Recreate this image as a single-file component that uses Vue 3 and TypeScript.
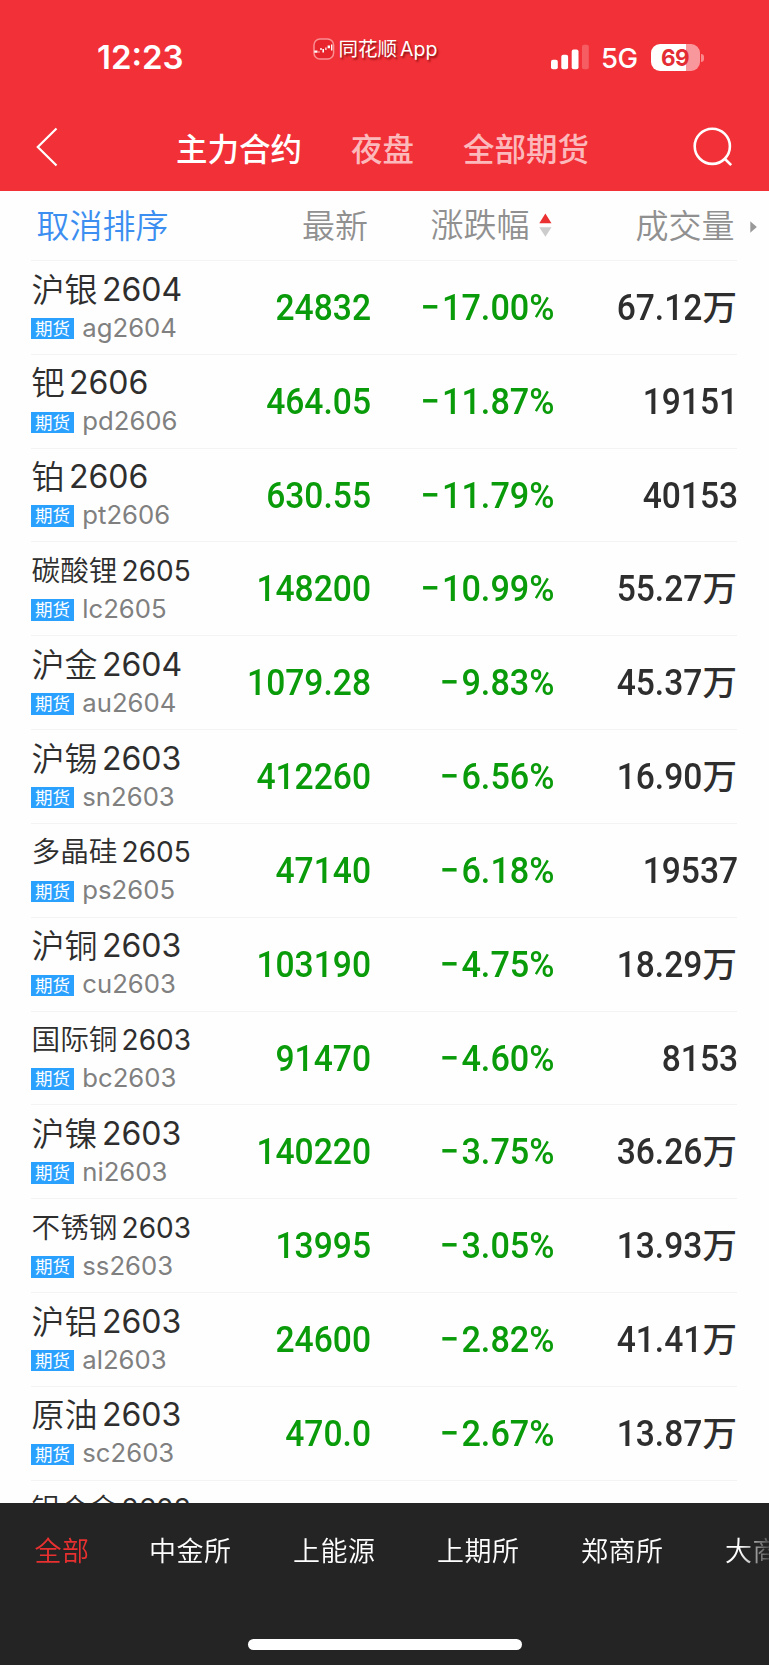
<script setup lang="ts">
interface Contract {
  name: string
  month: string
  code: string
  last: string
  change: string
  volume: string
  unit?: string
}

const contracts: Contract[] = [
  { name: '沪银', month: '2604', code: 'ag2604', last: '24832', change: '17.00%', volume: '67.12', unit: '万' },
  { name: '钯', month: '2606', code: 'pd2606', last: '464.05', change: '11.87%', volume: '19151' },
  { name: '铂', month: '2606', code: 'pt2606', last: '630.55', change: '11.79%', volume: '40153' },
  { name: '碳酸锂', month: '2605', code: 'lc2605', last: '148200', change: '10.99%', volume: '55.27', unit: '万' },
  { name: '沪金', month: '2604', code: 'au2604', last: '1079.28', change: '9.83%', volume: '45.37', unit: '万' },
  { name: '沪锡', month: '2603', code: 'sn2603', last: '412260', change: '6.56%', volume: '16.90', unit: '万' },
  { name: '多晶硅', month: '2605', code: 'ps2605', last: '47140', change: '6.18%', volume: '19537' },
  { name: '沪铜', month: '2603', code: 'cu2603', last: '103190', change: '4.75%', volume: '18.29', unit: '万' },
  { name: '国际铜', month: '2603', code: 'bc2603', last: '91470', change: '4.60%', volume: '8153' },
  { name: '沪镍', month: '2603', code: 'ni2603', last: '140220', change: '3.75%', volume: '36.26', unit: '万' },
  { name: '不锈钢', month: '2603', code: 'ss2603', last: '13995', change: '3.05%', volume: '13.93', unit: '万' },
  { name: '沪铝', month: '2603', code: 'al2603', last: '24600', change: '2.82%', volume: '41.41', unit: '万' },
  { name: '原油', month: '2603', code: 'sc2603', last: '470.0', change: '2.67%', volume: '13.87', unit: '万' },
  { name: '铝合金', month: '2603', code: '', last: '', change: '', volume: '' },
]

const topTabs: string[] = ['主力合约', '夜盘', '全部期货']
const exchanges: string[] = ['全部', '中金所', '上能源', '上期所', '郑商所', '大商所']
</script>

<template>
  <div class="screen">
    <header class="top">
      <div class="status">
        <span class="clock">12:23</span>
        <div class="brand">
          <svg width="22" height="22" viewBox="0 0 22 22">
            <rect x="1" y="1" width="19.6" height="20" rx="6" fill="#e8252c" stroke="#fa8f92" stroke-width="1.5" />
            <path d="M1.3 12.5h3.2v2.2H1.3zM5.3 13.5h1.3v1H5.3zM7.3 10h1.4v2H7.3zM9.4 11h1.6v3.4H9.4zM12.3 9.5h1.2v2.4h-1.2zM14.6 7.5H17v2.8h-2.4zM18 6.5h1.4v6H18z" fill="#fff" />
          </svg>
          <span class="brand-text">同花顺<i>App</i></span>
        </div>
        <svg class="signal" width="39" height="26" viewBox="0 0 39 26">
          <rect x="0" y="15.7" width="6.8" height="9.6" rx="2" fill="#fff" />
          <rect x="10.3" y="10.8" width="6.8" height="14.5" rx="2" fill="#fff" />
          <rect x="20.7" y="5.6" width="6.8" height="19.7" rx="2" fill="#fff" />
          <rect x="31" y="0.8" width="6.8" height="24.5" rx="2" fill="#fff" fill-opacity=".22" />
        </svg>
        <span class="network">5G</span>
        <div class="battery"><span class="level">69</span><i class="tip"></i></div>
      </div>
      <nav class="nav">
        <svg class="back" width="24" height="42" viewBox="0 0 24 42">
          <path d="M21.5 2.5 2.8 21l18.7 18.5" fill="none" stroke="#fff" stroke-width="2.2" />
        </svg>
        <div class="top-tabs">
          <span v-for="(tab, i) in topTabs" :key="tab" :class="{ active: i === 0 }">{{ tab }}</span>
        </div>
        <svg class="search" width="42" height="42" viewBox="0 0 42 42">
          <circle cx="20.3" cy="20.3" r="17.6" fill="none" stroke="#fff" stroke-width="2.6" />
          <path d="M32.5 32.5l6.7 6.7" stroke="#fff" stroke-width="2.6" />
        </svg>
      </nav>
    </header>

    <main class="list">
      <div class="head">
        <span class="reset">取消排序</span>
        <span class="h-last">最新</span>
        <span class="h-change">涨跌幅
          <svg width="13" height="25" viewBox="0 0 13 25">
            <path d="M0.3 10.2 6.4.6l6.1 9.6z" fill="#ea3031" />
            <path d="M0.3 14.3h12.2l-6.1 9.5z" fill="#ccc" />
          </svg>
        </span>
        <span class="h-volume">成交量</span>
        <svg class="more" width="7" height="12" viewBox="0 0 7 12"><path d="M.3.2 6.8 6 .3 11.8z" fill="#999" /></svg>
      </div>
      <div v-for="c in contracts" :key="c.name" class="row">
        <div class="title">
          <div class="name" :class="{ small: c.name.length > 2 }">
            <span>{{ c.name }}</span><span class="month">{{ c.month }}</span>
          </div>
          <div v-if="c.code" class="sub"><span class="tag">期货</span><span class="code">{{ c.code }}</span></div>
        </div>
        <div class="figure last">{{ c.last }}</div>
        <div class="figure change"><template v-if="c.change"><span class="minus">−</span>{{ c.change }}</template></div>
        <div class="volume"><span class="figure" :class="{ plain: !c.unit }">{{ c.volume }}</span><span v-if="c.unit" class="unit">{{ c.unit }}</span></div>
      </div>
    </main>

    <footer class="bottom">
      <div class="exchanges">
        <span v-for="(x, i) in exchanges" :key="x" :class="{ active: i === 0 }">{{ x }}</span>
      </div>
      <div class="home"></div>
    </footer>
  </div>
</template>

<style>
body {
  margin: 0;
}
</style>

<style scoped>
.screen {
  width: 769px;
  height: 1665px;
  overflow: hidden;
  display: flex;
  flex-direction: column;
  background: #fefefe;
  font-family: Inter, 'Noto Sans CJK SC', sans-serif;
}
.top {
  height: 191px;
  flex: none;
  background: #f23038;
  color: #fff;
}
.status {
  height: 108px;
  display: flex;
  align-items: flex-start;
}
.clock {
  width: 214px;
  padding-left: 97px;
  margin-top: 37.4px;
  line-height: 40px;
  font-size: 33px;
  font-weight: 600;
}
.brand {
  width: 238px;
  display: flex;
  align-items: center;
  margin-top: 37px;
  height: 23px;
  margin-left: 1.5px;
}
.brand-text {
  margin-left: 4px;
  padding-top: 2px;
  font-size: 19.5px;
  line-height: 23px;
  text-shadow: 1.5px 2px 2px rgba(90, 0, 0, 0.65);
  white-space: nowrap;
}
.brand-text i {
  font-style: normal;
  margin-left: 3px;
}
.signal {
  margin-top: 44px;
}
.network {
  width: 49.5px;
  margin: 38.4px 0 0 11.5px;
  font-size: 27.5px;
  line-height: 40px;
  font-weight: 450;
  letter-spacing: -0.5px;
}
.battery {
  position: relative;
  width: 49px;
  height: 27.5px;
  margin-top: 43.5px;
  border-radius: 9px;
  background: linear-gradient(90deg, #fff 70.5%, #f9989c 70.5%);
}
.level {
  display: block;
  text-align: center;
  color: #e32c33;
  font-size: 22.5px;
  line-height: 27.5px;
  font-weight: 650;
  letter-spacing: -0.5px;
}
.tip {
  position: absolute;
  right: -4.5px;
  top: 10px;
  width: 3px;
  height: 8px;
  border-radius: 0 4px 4px 0;
  background: #f9898d;
}
.nav {
  display: flex;
  height: 83px;
}
.back {
  margin: 18px 0 0 34.5px;
}
.top-tabs {
  display: flex;
  gap: 49px;
  width: 516px;
  margin-left: 117.5px;
  padding-top: 17.5px;
  font-size: 31.5px;
  line-height: 48px;
  font-weight: 500;
  color: #fcb9bc;
  white-space: nowrap;
}
.top-tabs .active {
  color: #fff;
}
.search {
  margin: 18px 0 0 -0.5px;
}
.list {
  height: 1312px;
  overflow: hidden;
}
.head {
  height: 69px;
  display: flex;
  font-size: 33px;
  line-height: 71px;
  font-weight: 350;
  color: #909090;
  white-space: nowrap;
}
.reset {
  width: 265.5px;
  padding-left: 36.5px;
  color: #3c8ef0;
}
.h-last {
  width: 128.5px;
}
.h-change {
  width: 205px;
  display: flex;
  align-items: center;
}
.h-change svg {
  margin-left: 9px;
}
.h-volume {
  width: 114px;
}
.more {
  margin-top: 29.5px;
}
.row {
  display: flex;
  align-items: flex-start;
  height: 93.83px;
  margin: 0 32px 0 31px;
  border-top: 1.5px solid #f3f3f3;
  box-sizing: border-box;
  color: #2e2e2e;
}
.title {
  width: 200px;
}
.name {
  display: flex;
  height: 48px;
  margin: 3.5px 0 0 0.5px;
  font-size: 33px;
  line-height: 50px;
  font-weight: 350;
  white-space: nowrap;
}
.month {
  margin-left: 4.5px;
  font-size: 32px;
  font-weight: 370;
}
.small {
  font-size: 28.7px;
}
.small .month {
  margin-left: 4px;
  font-size: 28px;
}
.sub {
  display: flex;
  align-items: center;
  height: 30px;
}
.tag {
  width: 43px;
  height: 21.5px;
  margin-top: 2px;
  background: #2ba1ff;
  color: #fff;
  font-size: 17.5px;
  line-height: 21px;
  text-align: center;
}
.code {
  margin-left: 8.3px;
  font-size: 25.7px;
  line-height: 30px;
  color: #808080;
  font-weight: 380;
}
.figure {
  font-family: Roboto, sans-serif;
  font-size: 37px;
  font-weight: 500;
  line-height: 93px;
  text-align: right;
  transform: scaleX(0.908);
  transform-origin: right;
  white-space: nowrap;
}
.last {
  width: 140px;
  color: #0a9b0a;
}
.change {
  width: 183.5px;
  color: #0a9b0a;
  transform: scaleX(0.925);
}
.minus {
  margin-right: 2.5px;
}
.volume {
  width: 182.5px;
  display: flex;
  justify-content: flex-end;
}
.plain {
  margin-right: -1.5px;
}
.unit {
  font-size: 34.5px;
  line-height: 93px;
  font-weight: 500;
}
.bottom {
  flex: none;
  height: 162px;
  background: #242424;
  color: #fff;
}
.exchanges {
  display: flex;
  gap: 61.5px;
  padding: 28.5px 0 0 34.5px;
  height: 108.5px;
  font-size: 27px;
  line-height: 40px;
  font-weight: 350;
  letter-spacing: 0.5px;
  white-space: nowrap;
  overflow: hidden;
  -webkit-mask-image: linear-gradient(90deg, #000 740px, transparent 775px);
  mask-image: linear-gradient(90deg, #000 740px, transparent 775px);
}
.exchanges .active {
  color: #e93030;
  margin-right: -2px;
}
.home {
  width: 274px;
  height: 10.5px;
  margin: -1px auto 0;
  border-radius: 6px;
  background: #fff;
}
</style>
